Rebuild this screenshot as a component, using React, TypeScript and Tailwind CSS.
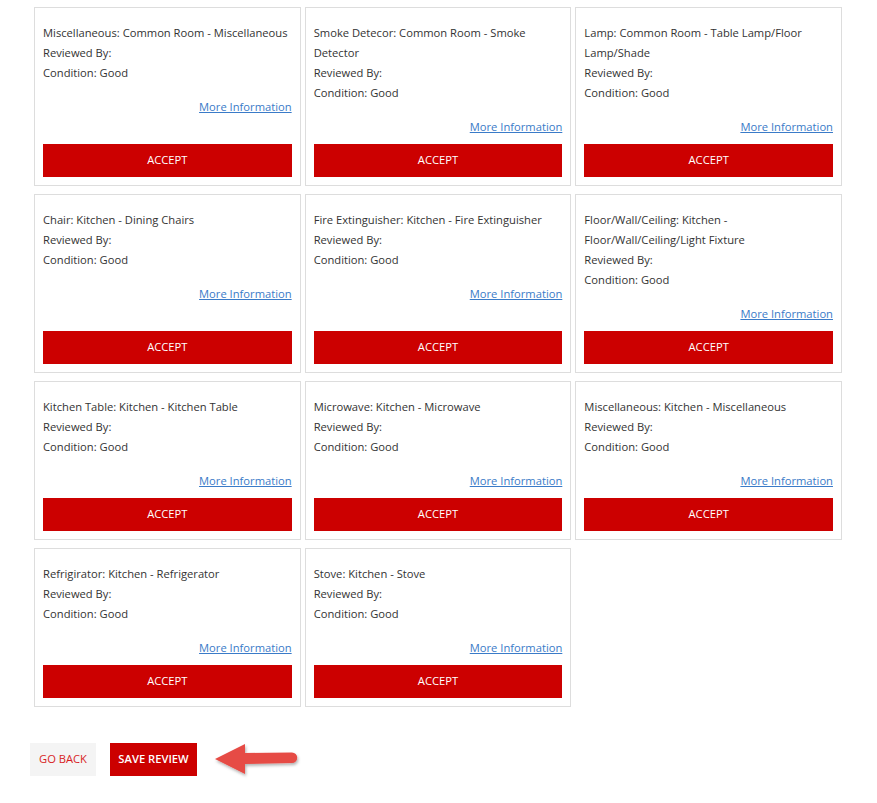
const ITEMS = [
  'Miscellaneous: Common Room - Miscellaneous',
  'Smoke Detecor: Common Room - Smoke Detector',
  'Lamp: Common Room - Table Lamp/Floor Lamp/Shade',
  'Chair: Kitchen - Dining Chairs',
  'Fire Extinguisher: Kitchen - Fire Extinguisher',
  'Floor/Wall/Ceiling: Kitchen - Floor/Wall/Ceiling/Light Fixture',
  'Kitchen Table: Kitchen - Kitchen Table',
  'Microwave: Kitchen - Microwave',
  'Miscellaneous: Kitchen - Miscellaneous',
  'Refrigirator: Kitchen - Refrigerator',
  'Stove: Kitchen - Stove',
]

function ReviewCard({ title }: { title: string }) {
  return (
    <div className="flex flex-1 flex-col border border-[#dddddd] bg-white px-2 pt-[15px] pb-2">
      <div className="text-[11.2px] leading-5 text-[#333333]">
        <p>{title}</p>
        <p>Reviewed By:</p>
        <p>Condition: Good</p>
      </div>
      <div className="mt-[14px] mb-[7px] text-right text-[11.2px] leading-5">
        <a href="#" className="text-[#3a7bc8] underline">More Information</a>
      </div>
      <button className="mt-auto h-[33px] w-full bg-[#cc0000] text-[11.2px] text-white uppercase">
        Accept
      </button>
    </div>
  )
}

export default function App() {
  return (
    <div className="min-h-screen bg-white font-['Open_Sans',sans-serif]">
      <div className="pt-[7px] pl-[34px] w-[842px]">
        <div className="grid grid-cols-3 gap-x-[4px] gap-y-[8px]">
          {ITEMS.map((t, i) => (
            <div key={i} className="flex flex-col">
              <ReviewCard title={t} />
            </div>
          ))}
        </div>
      </div>

      {/* Footer actions */}
      <div className="mt-[36px] ml-[30px] flex items-start">
        <button className="h-[33px] w-[66px] bg-[#f4f4f4] text-[11.2px] text-[#d81e1e] uppercase">Go Back</button>
        <button className="ml-[14px] h-[33px] w-[87px] bg-[#cc0000] text-[11.2px] font-semibold text-white uppercase">Save Review</button>
        <svg width="90" height="40" viewBox="0 0 90 40" className="ml-[14px] mt-[-3px]">
          <defs>
            <filter id="sh" x="-20%" y="-30%" width="140%" height="170%">
              <feDropShadow dx="1" dy="2" stdDeviation="1.5" floodColor="#000" floodOpacity="0.3" />
            </filter>
          </defs>
          <g filter="url(#sh)" fill="#e64b45">
            <polygon points="4,19 34,4 34,34" />
            <path d="M33 13 L81 12.5 A5 5 0 0 1 81 23 L33 24 Z" />
          </g>
        </svg>
      </div>
    </div>
  )
}
